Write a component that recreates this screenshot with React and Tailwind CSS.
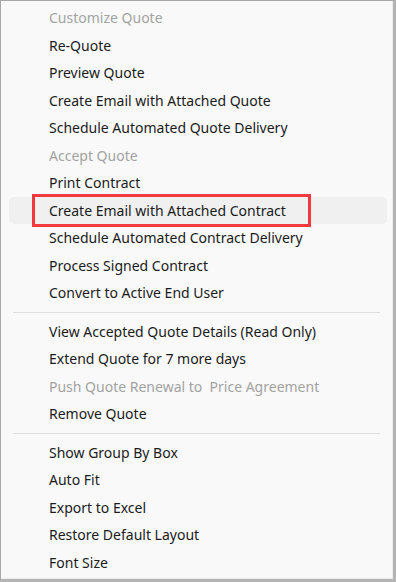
const groups = [
  [
    { label: "Customize Quote", disabled: true },
    { label: "Re-Quote" },
    { label: "Preview Quote" },
    { label: "Create Email with Attached Quote" },
    { label: "Schedule Automated Quote Delivery" },
    { label: "Accept Quote", disabled: true },
    { label: "Print Contract" },
    { label: "Create Email with Attached Contract", active: true },
    { label: "Schedule Automated Contract Delivery" },
    { label: "Process Signed Contract" },
    { label: "Convert to Active End User" },
  ],
  [
    { label: "View Accepted Quote Details (Read Only)" },
    { label: "Extend Quote for 7 more days" },
    { label: "Push Quote Renewal to\u00a0 Price Agreement", disabled: true },
    { label: "Remove Quote" },
  ],
  [
    { label: "Show Group By Box" },
    { label: "Auto Fit" },
    { label: "Export to Excel" },
    { label: "Restore Default Layout" },
    { label: "Font Size" },
  ],
];

function MenuItem({ item }) {
  return (
    <div
      className={
        "relative ml-[8px] mr-[5px] flex h-[27.5px] items-center rounded-[5px] pl-[40px] text-[14px] " +
        (item.active ? "bg-[#f0f0f0] " : "") +
        (item.disabled ? "text-[#a3a3a3]" : "text-[#1b1b1b]")
      }
    >
      <span className="whitespace-pre">{item.label}</span>
      {item.active && (
        <div className="pointer-events-none absolute left-[23px] top-[-2.5px] h-[33px] w-[279px] border-[3.5px] border-[#f2393f]" />
      )}
    </div>
  );
}

export default function App() {
  return (
    <div
      className="h-[582px] w-[396px] border-t border-l border-r-[3px] border-b-[3px] border-t-[#a8a8a8] border-l-[#a8a8a8] border-r-[#b4b4b4] border-b-[#b4b4b4] bg-[#f9f9f9]"
      style={{ fontFamily: '"Noto Sans", "Open Sans", sans-serif' }}
    >
      <div className="h-full border-r border-b border-[#ececec] pt-[3px]">
        {groups.map((group, gi) => (
          <div key={gi}>
            {gi > 0 && (
              <div className="py-[5px]">
                <div className="mx-[12px] h-px bg-[#e0e0e0]" />
              </div>
            )}
            {group.map((item) => (
              <MenuItem key={item.label} item={item} />
            ))}
          </div>
        ))}
      </div>
    </div>
  );
}
